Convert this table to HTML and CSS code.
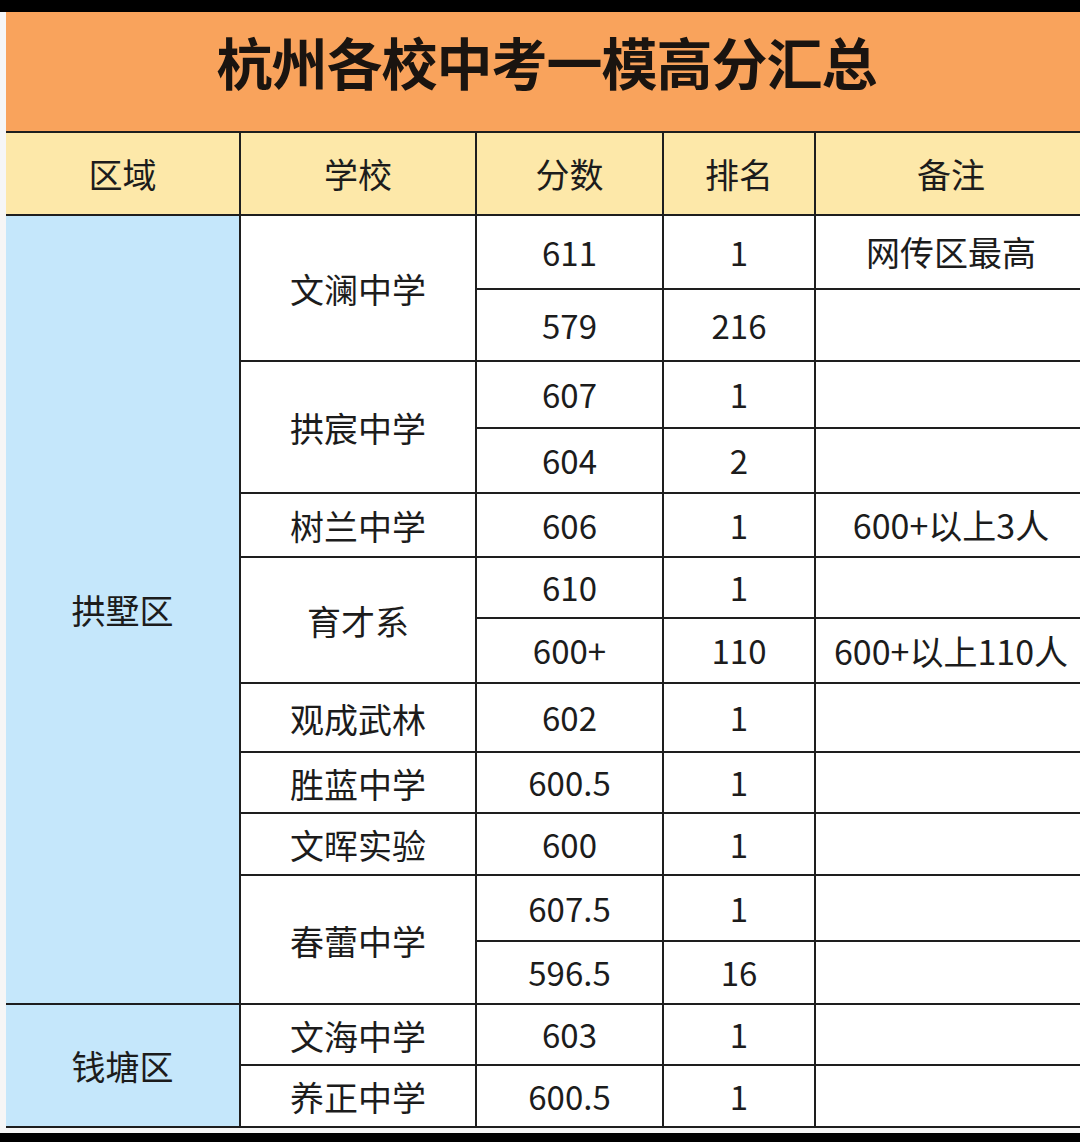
FILE: index.html
```html
<!DOCTYPE html>
<html lang="zh-CN">
<head>
<meta charset="utf-8">
<title>杭州各校中考一模高分汇总</title>
<link rel="stylesheet" href="styles.css">
</head>
<body>
<div class="sheet">
  <div class="board">
    <div class="title">杭州各校中考一模高分汇总</div>
    <table class="grid">
      <colgroup>
        <col class="c1"><col class="c2"><col class="c3"><col class="c4"><col class="c5">
      </colgroup>
      <thead>
        <tr class="h"><th class="first">区域</th><th>学校</th><th>分数</th><th>排名</th><th>备注</th></tr>
      </thead>
      <tbody>
        <tr class="r1"><td class="area first" rowspan="12">拱墅区</td><td class="school" rowspan="2">文澜中学</td><td class="num">611</td><td class="num">1</td><td>网传区最高</td></tr>
        <tr class="r2"><td class="num">579</td><td class="num">216</td><td></td></tr>
        <tr class="r3"><td class="school" rowspan="2">拱宸中学</td><td class="num">607</td><td class="num">1</td><td></td></tr>
        <tr class="r4"><td class="num">604</td><td class="num">2</td><td></td></tr>
        <tr class="r5"><td class="school">树兰中学</td><td class="num">606</td><td class="num">1</td><td>600+以上3人</td></tr>
        <tr class="r6"><td class="school" rowspan="2">育才系</td><td class="num">610</td><td class="num">1</td><td></td></tr>
        <tr class="r7"><td class="num">600+</td><td class="num">110</td><td>600+以上110人</td></tr>
        <tr class="r8"><td class="school">观成武林</td><td class="num">602</td><td class="num">1</td><td></td></tr>
        <tr class="r9"><td class="school">胜蓝中学</td><td class="num">600.5</td><td class="num">1</td><td></td></tr>
        <tr class="r10"><td class="school">文晖实验</td><td class="num">600</td><td class="num">1</td><td></td></tr>
        <tr class="r11"><td class="school" rowspan="2">春蕾中学</td><td class="num">607.5</td><td class="num">1</td><td></td></tr>
        <tr class="r12"><td class="num">596.5</td><td class="num">16</td><td></td></tr>
        <tr class="r13"><td class="area first" rowspan="2">钱塘区</td><td class="school">文海中学</td><td class="num">603</td><td class="num">1</td><td></td></tr>
        <tr class="r14"><td class="school">养正中学</td><td class="num">600.5</td><td class="num">1</td><td></td></tr>
      </tbody>
    </table>
  </div>
</div>
</body>
</html>
```

FILE: styles.css
```css
html, body {
  margin: 0;
  padding: 0;
  background: #000;
}

body {
  width: 1080px;
  height: 1142px;
  overflow: hidden;
  font-family: "Noto Sans CJK SC", "Noto Sans", sans-serif;
  color: #1c1c1c;
}

.sheet {
  margin-top: 12px;
  height: 1121px;
  background: #f6f6f6;
  padding-left: 6px;
  box-sizing: border-box;
  overflow: hidden;
}

.board {
  width: 1081px;
}

.title {
  height: 119px;
  background: #f9a35c;
  display: flex;
  align-items: center;
  justify-content: center;
  font-size: 56px;
  font-weight: 700;
  letter-spacing: -1px;
  color: #1a1410;
  padding-bottom: 22px;
  box-sizing: border-box;
}

.grid {
  width: 1081px;
  table-layout: fixed;
  border-collapse: collapse;
  background: #fff;
}

.c1 { width: 234px; }
.c2 { width: 236px; }
.c3 { width: 187px; }
.c4 { width: 152px; }
.c5 { width: 272px; }

.grid th,
.grid td {
  border: 2px solid #1e1e1e;
  padding: 0;
  text-align: center;
  vertical-align: middle;
  font-size: 34px;
  font-weight: 400;
  line-height: 1;
  white-space: nowrap;
}

.grid .first {
  border-left: none;
}

.grid th {
  background: #fde8a9;
  color: #1c1c1c;
}

.grid td.area {
  background: #c5e7fb;
}

.grid td.num {
  font-size: 33px;
}

.grid td.school {
  padding-top: 2px;
}

.h { height: 83px; }
.r1 { height: 74px; }
.r2 { height: 72px; }
.r3 { height: 67px; }
.r4 { height: 65px; }
.r5 { height: 64px; }
.r6 { height: 61px; }
.r7 { height: 65px; }
.r8 { height: 69px; }
.r9 { height: 61px; }
.r10 { height: 62px; }
.r11 { height: 66px; }
.r12 { height: 63px; }
.r13 { height: 61px; }
.r14 { height: 62px; }
```
